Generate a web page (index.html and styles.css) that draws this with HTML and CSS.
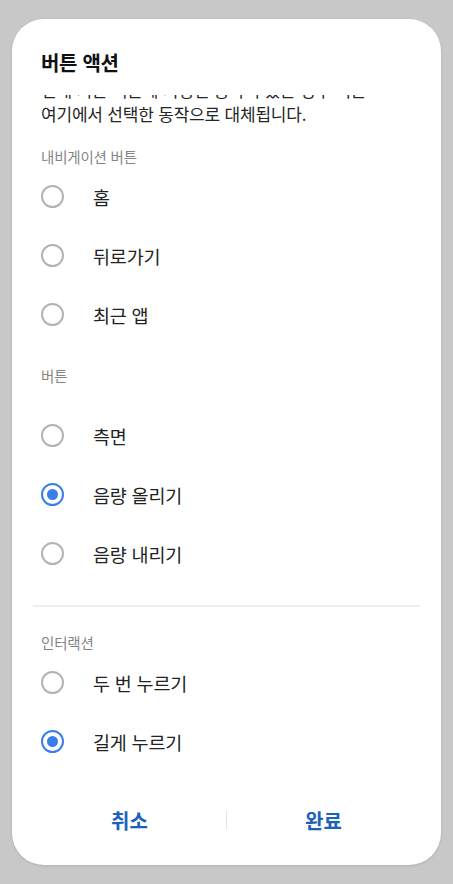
FILE: index.html
```html
<!DOCTYPE html>
<html lang="ko">
<head>
<meta charset="utf-8">
<link rel="stylesheet" href="styles.css">
</head>
<body>
<div class="dialog">
  <div class="title">버튼 액션</div>
  <div class="scroll">
    <p class="desc">현재 기본 버튼에 지정된 동작이 있는 경우 이는<br>여기에서 선택한 동작으로 대체됩니다.</p>

    <div class="section-label">내비게이션 버튼</div>
    <div class="option"><span class="radio"></span><span class="label">홈</span></div>
    <div class="option"><span class="radio"></span><span class="label">뒤로가기</span></div>
    <div class="option"><span class="radio"></span><span class="label">최근 앱</span></div>

    <div class="section-label spaced">버튼</div>
    <div class="option"><span class="radio"></span><span class="label">측면</span></div>
    <div class="option"><span class="radio checked"></span><span class="label">음량 올리기</span></div>
    <div class="option"><span class="radio"></span><span class="label">음량 내리기</span></div>

    <div class="divider"></div>

    <div class="section-label after-divider">인터랙션</div>
    <div class="option"><span class="radio"></span><span class="label">두 번 누르기</span></div>
    <div class="option"><span class="radio checked"></span><span class="label">길게 누르기</span></div>
  </div>
  <div class="footer">
    <button class="action">취소</button>
    <span class="vsep"></span>
    <button class="action">완료</button>
  </div>
</div>
</body>
</html>
```

FILE: styles.css
```css
html, body {
  margin: 0;
  padding: 0;
}
body {
  background: #c8c8c8;
  width: 453px;
  height: 884px;
  font-family: "Noto Sans CJK KR", "Noto Sans", sans-serif;
  padding-top: 19px;
  box-sizing: border-box;
}
.dialog {
  margin: 0 12px;
  width: 429px;
  height: 846px;
  background: #fff;
  border-radius: 32px;
  box-shadow: 0 1px 3px rgba(0,0,0,0.12);
  display: flex;
  flex-direction: column;
  overflow: hidden;
}
.title {
  padding: 30px 29px 18px;
  font-size: 20px;
  line-height: 28px;
  font-weight: 700;
  color: #111;
  letter-spacing: -0.3px;
}
.scroll {
  overflow: hidden;
  padding: 0 29px;
  flex: 1;
}
.desc {
  margin: -17px 0 0;
  font-size: 17px;
  line-height: 24px;
  color: #252525;
  letter-spacing: -0.2px;
}
.section-label {
  margin-top: 21px;
  font-size: 14.5px;
  line-height: 20px;
  color: #858585;
  letter-spacing: -0.2px;
}
.section-label.spaced {
  margin-top: 22px;
  margin-bottom: 20px;
}
.section-label.after-divider {
  margin-top: 26px;
}
.option {
  height: 59px;
  display: flex;
  align-items: center;
}
.radio {
  width: 23px;
  height: 23px;
  box-sizing: border-box;
  border: 2px solid #b3b3b3;
  border-radius: 50%;
  flex: none;
  display: flex;
  align-items: center;
  justify-content: center;
}
.radio.checked {
  border-color: #3b7ee8;
}
.radio.checked::after {
  content: "";
  width: 11px;
  height: 11px;
  border-radius: 50%;
  background: #3b7ee8;
}
.label {
  margin-left: 29px;
  font-size: 18.5px;
  color: #222;
  letter-spacing: -0.2px;
}
.divider {
  height: 2px;
  background: #eceef0;
  margin: 22px -8px 0;
}
.footer {
  height: 90px;
  padding: 0 21px;
  display: flex;
  align-items: center;
  flex: none;
  box-sizing: border-box;
}
.action {
  flex: 1;
  border: none;
  background: none;
  font-family: inherit;
  font-size: 20px;
  font-weight: 700;
  color: #1b62b8;
  padding: 0;
}
.vsep {
  width: 1px;
  height: 18px;
  background: #e3e3e3;
}
```
